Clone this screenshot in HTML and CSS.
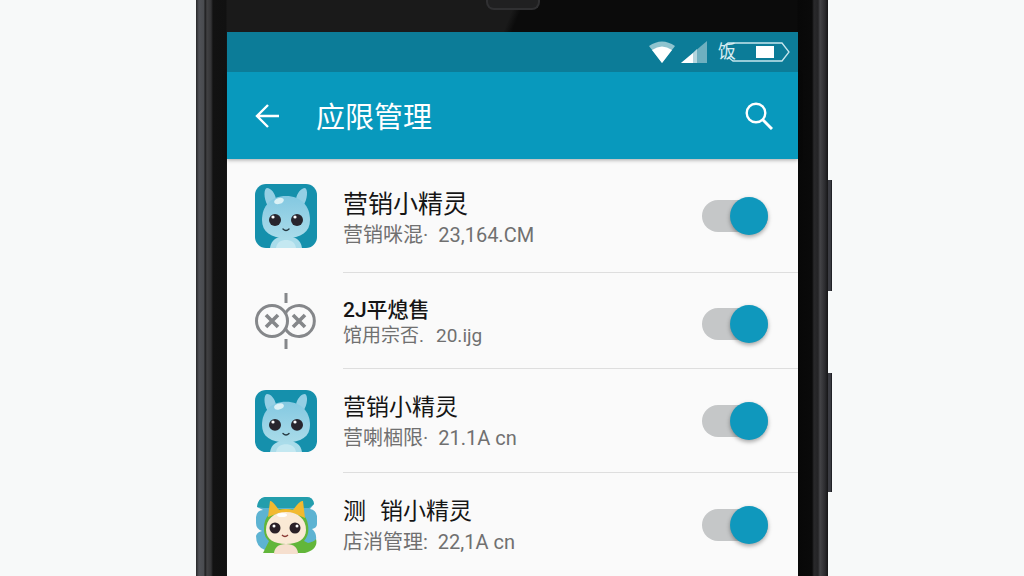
FILE: index.html
```html
<!DOCTYPE html>
<html lang="zh-CN">
<head>
    <meta charset="UTF-8">
    <meta name="viewport" content="width=device-width, initial-scale=1.0">
    <title>应限管理</title>
    <link rel="stylesheet" href="styles.css">
</head>
<body>
    <!-- shared mascot drawing -->
    <svg class="defs" width="0" height="0" aria-hidden="true">
        <defs>
            <linearGradient id="skin" x1="0" y1="0" x2="0" y2="1">
                <stop offset="0" stop-color="#83c8e1"/>
                <stop offset="1" stop-color="#a9dbe9"/>
            </linearGradient>
            <symbol id="mascot" viewBox="0 0 62 64" preserveAspectRatio="none">
                <rect width="62" height="64" rx="11" fill="#1590ac"/>
                <path d="M15 64c1-8 7-12 16-12s15 4 16 12z" fill="#a9dcea"/>
                <path d="M21 64c1-6 5-8 10-8s9 2 10 8z" fill="#c4e8f1"/>
                <path d="M13 22C8 14 9 4 12 4c4 0 8 5 9 11zM41 15c1-6 5-11 9-11 3 1 3 11-2 18z" fill="#94cfe4"/>
                <path d="M31 12C16 12 7 22 7 36c0 12 9 18 24 18s24-6 24-18c0-14-9-24-24-24z" fill="url(#skin)"/>
                <ellipse cx="24" cy="17" rx="5" ry="3" fill="#dbf1f6" transform="rotate(-18 24 17)"/>
                <circle cx="20" cy="36" r="6" fill="#28252d"/>
                <circle cx="42" cy="36" r="6" fill="#28252d"/>
                <circle cx="18" cy="33" r="1.6" fill="#fff"/>
                <circle cx="40" cy="33" r="1.6" fill="#fff"/>
                <path d="M28 45q3 3 6 0" fill="none" stroke="#263941" stroke-width="1.4" stroke-linecap="round"/>
            </symbol>
        </defs>
    </svg>

    <div class="phone">
        <span class="speaker"></span>
        <span class="side-key side-key-top"></span>
        <span class="side-key side-key-bottom"></span>

        <div class="screen">
            <div class="status-bar">
                <svg width="28" height="24" viewBox="0 0 28 24">
                    <path d="M1 6Q14-3 27 6L14 23z" fill="#8fc4cf"/>
                    <path d="M4 10Q14 3 24 10L14 23z" fill="#fff"/>
                </svg>
                <svg width="26" height="24" viewBox="0 0 26 24">
                    <path d="M26 1v22H0z" fill="#6fb0c0"/>
                    <path d="M12 13v10H0z" fill="#fff"/>
                    <path d="M12 13l4-4v14h-4z" fill="#b5d6de"/>
                </svg>
                <span class="battery">
                    <span class="battery-text">饭</span>
                    <svg width="72" height="24" viewBox="0 0 72 24">
                        <path d="M6 6l4-3h54l7 9-7 9H15l-5-4" fill="none" stroke="#c6e6ed" stroke-width="1.3"/>
                        <rect x="38" y="6" width="18" height="12" fill="#fff"/>
                    </svg>
                </span>
            </div>

            <header class="app-bar">
                <button class="icon-button" aria-label="返回">
                    <svg width="24" height="24" viewBox="0 0 24 24">
                        <path d="M24 12H2M13 1L2 12l11 11" fill="none" stroke="#fff" stroke-width="2.4"/>
                    </svg>
                </button>
                <h1>应限管理</h1>
                <button class="icon-button" aria-label="搜索">
                    <svg width="28" height="28" viewBox="0 0 28 28">
                        <circle cx="11" cy="11" r="9.3" fill="none" stroke="#fff" stroke-width="2.4"/>
                        <path d="M17.5 17.5L27 27" stroke="#fff" stroke-width="3"/>
                    </svg>
                </button>
            </header>

            <main class="app-list">
                <div class="app large">
                    <svg class="app-icon" width="62" height="64"><use href="#mascot"/></svg>
                    <div class="app-body">
                        <label class="app-text" for="app1">
                            <span class="app-name">营销小精灵</span>
                            <span class="app-info"><span>营销咪混·</span><span>23,164.CM</span></span>
                        </label>
                        <input class="switch" type="checkbox" id="app1" checked>
                    </div>
                </div>

                <div class="app small">
                    <svg class="app-icon" width="62" height="58" viewBox="0 0 62 58">
                        <g fill="none" stroke="#85878a" stroke-width="3">
                            <circle cx="17" cy="29" r="15.5"/>
                            <path d="M30 22a15.5 15.5 0 1 1 0 14"/>
                            <path d="M31 1v10M31 47v10"/>
                            <path d="M11 23l12 12M23 23L11 35M38 23l12 12M50 23L38 35" stroke-width="3.6"/>
                        </g>
                    </svg>
                    <div class="app-body">
                        <label class="app-text" for="app2">
                            <span class="app-name">2J平熄售</span>
                            <span class="app-info"><span>馆用宗否.</span><span>20.ijg</span></span>
                        </label>
                        <input class="switch" type="checkbox" id="app2" checked>
                    </div>
                </div>

                <div class="app">
                    <svg class="app-icon" width="62" height="62"><use href="#mascot"/></svg>
                    <div class="app-body">
                        <label class="app-text" for="app3">
                            <span class="app-name">营销小精灵</span>
                            <span class="app-info"><span>营喇棝限·</span><span>21.1A cn</span></span>
                        </label>
                        <input class="switch" type="checkbox" id="app3" checked>
                    </div>
                </div>

                <div class="app">
                    <svg class="app-icon" width="62" height="58" viewBox="0 0 62 58">
                        <path d="M10 1h42q6 0 7 7l-4 5q6 1 7 7v8q0 4-5 5 5 4 4 11l-9 10H10q-9-3-9-14 1-4 6-5-6-2-6-8v-6q1-7 7-7L2 11q1-9 8-10z" fill="#5db3d2"/>
                        <path d="M10 1h42q6 0 7 7l-5 4H9l-7-1q1-9 8-10z" fill="#239eac"/>
                        <path d="M31 13C17 12 9 20 9 32c0 8 2 10 5 13L8 57h42c8-2 13-7 11-14-2 3-5 3-8 4l-4-2c4-5 5-9 4-16-1-10-9-16-22-16z" fill="#62b63a"/>
                        <path d="M13 21L15 5q2-1 9 9 7-2 14 0 7-10 10-9l2 17-12-5H24z" fill="#f2b92f"/>
                        <path d="M19 58c0-6 4-10 12-10s12 4 12 10z" fill="#f6dfce"/>
                        <path d="M31 16c-12 0-20 7-20 18 0 9 8 14 20 14s20-5 20-14c0-11-8-18-20-18z" fill="#fae9d5"/>
                        <ellipse cx="27" cy="19" rx="5" ry="2" fill="#fff"/>
                        <circle cx="20" cy="32" r="5.5" fill="#2b2026"/>
                        <circle cx="40" cy="32" r="5.5" fill="#2b2026"/>
                        <circle cx="19" cy="30" r="1.5" fill="#fff"/>
                        <circle cx="42" cy="30" r="1.5" fill="#fff"/>
                        <path d="M27 39q3 3 6 0" fill="none" stroke="#8b3a35" stroke-width="1.4"/>
                    </svg>
                    <div class="app-body">
                        <label class="app-text" for="app4">
                            <span class="app-name"><span>测</span><span>销小精灵</span></span>
                            <span class="app-info"><span>店消管理:</span><span>22,1A cn</span></span>
                        </label>
                        <input class="switch" type="checkbox" id="app4" checked>
                    </div>
                </div>
            </main>
        </div>
    </div>
</body>
</html>
```
FILE: styles.css
```css
* {
    box-sizing: border-box;
}

body {
    margin: 0;
    background: #f7f9f9;
    font-family: Roboto, "Noto Sans CJK SC", sans-serif;
    color: #151515;
}

.defs {
    position: absolute;
}

.phone {
    position: relative;
    max-width: 632px;
    min-height: 100vh;
    margin: 0 auto;
    padding: 32px 30px 0 31px;
    background: linear-gradient(to right,
        #27282a 0, #505257 3px, #494b4f 8px, #1b1b1c 9px, #414143 11px, #343436 15px, #121212 17px, #111 30px,
        transparent 31px, transparent calc(100% - 31px),
        #080808 calc(100% - 30px), #0a0a0a calc(100% - 16px), #29292b calc(100% - 14px), #242426 calc(100% - 10px), #444447 calc(100% - 8px), #2b2b2e calc(100% - 3px), #151516 100%),
        linear-gradient(112deg, #1a1a1a 37%, #0b0b0b 38%);
}

.speaker {
    position: absolute;
    top: 0;
    left: 50%;
    width: 54px;
    height: 10px;
    margin-left: -26px;
    background: #202021;
    border: 2px solid #303032;
    border-top: none;
    border-radius: 0 0 8px 8px;
}

.side-key {
    position: absolute;
    right: -4px;
    width: 4px;
    background: #3b3c42;
    border-right: 1px solid #202126;
}

.side-key-top {
    top: 180px;
    height: 111px;
}

.side-key-bottom {
    top: 373px;
    height: 119px;
}

.screen {
    background: #fafafa;
}

.status-bar {
    position: relative;
    z-index: 1;
    display: flex;
    align-items: center;
    justify-content: flex-end;
    gap: 5px;
    height: 40px;
    padding-right: 8px;
    background: #0c7c98;
}

.battery {
    position: relative;
    display: flex;
    margin-left: 6px;
}

.battery-text {
    position: absolute;
    left: 0;
    top: 0;
    color: #d8edf2;
    font-size: 18px;
    line-height: 24px;
}

.app-bar {
    position: relative;
    display: flex;
    align-items: center;
    height: 87px;
    padding: 0 25px 0 28px;
    background: #0899bd;
    color: #fff;
    box-shadow: 0 1px 4px rgba(0, 0, 0, 0.35);
}

.app-bar h1 {
    flex: 1;
    margin: 0 0 0 37px;
    padding-top: 4px;
    font-size: 29px;
    line-height: 40px;
    font-weight: 400;
}

.icon-button {
    display: flex;
    padding: 0;
    border: none;
    background: none;
    cursor: pointer;
}

.app {
    display: flex;
    align-items: center;
    gap: 26px;
    padding-left: 28px;
}

.app-icon {
    flex: none;
}

.app-body {
    flex: 1;
    display: flex;
    align-items: center;
    justify-content: space-between;
    height: 104px;
    padding-right: 30px;
    border-bottom: 1px solid #dedede;
}

.app:last-child .app-body {
    border-bottom: none;
}

.app-text {
    padding-top: 2px;
}

.app-name {
    display: flex;
    gap: 14px;
    font-size: 23px;
    line-height: 32px;
}

.app-info {
    display: flex;
    gap: 10px;
    color: #707070;
    font-size: 20px;
    line-height: 28px;
}

.large .app-body {
    height: 114px;
}

.large .app-text {
    padding-top: 6px;
}

.large .app-name {
    font-size: 25px;
    line-height: 32px;
}

.small .app-body {
    height: 96px;
    padding-top: 6px;
}

.small .app-text {
    padding-top: 0;
}

.small .app-name {
    font-size: 21px;
    line-height: 24px;
    font-weight: 500;
}

.small .app-info {
    gap: 12px;
    font-size: 19px;
}

.switch {
    position: relative;
    appearance: none;
    width: 66px;
    height: 32px;
    margin: 0;
    border-radius: 16px;
    background: #c5c7c8;
    cursor: pointer;
}

.switch::before {
    content: "";
    position: absolute;
    top: -3px;
    left: 0;
    width: 38px;
    height: 38px;
    border-radius: 50%;
    background: #f1f1f1;
    box-shadow: 0 2px 4px rgba(0, 0, 0, 0.35);
}

.switch:checked::before {
    left: 28px;
    background: #0f98bd;
}
```
